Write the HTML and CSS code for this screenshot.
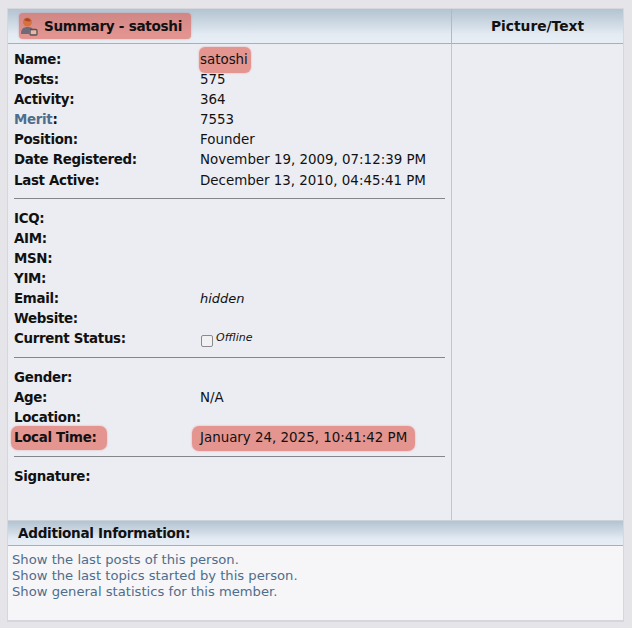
FILE: index.html
```html
<!DOCTYPE html>
<html lang="en">
<head>
<meta charset="UTF-8" />
<title>Summary - satoshi</title>
<link rel="stylesheet" href="styles.css">
</head>
<body>

<div class="profile">

  <div class="columns">
    <div class="head head-left">
      <span class="mark mark-title">
        <svg class="icon" width="18" height="20" viewBox="0 0 18 20">
          <path d="M1 18 C1 12 4 11 8 11 C11 11 13 12 13 14 L9 14 L9 18 Z" fill="#6e6a78" />
          <circle cx="7.5" cy="6" r="4.5" fill="#d9713c" />
          <path d="M4 4 C6 1 10 2 11 5 C8 6 6 5 4 4 Z" fill="#a8482a" />
          <rect x="10" y="13.5" width="7" height="5.5" rx="1" fill="#e8b9a0" stroke="#55505c" stroke-width="1.3" />
        </svg>
        Summary - satoshi
      </span>
    </div>
    <div class="head head-right">Picture/Text</div>

    <div class="details">
      <div class="row"><b>Name:</b><span><span class="mark mark-name">satoshi</span></span></div>
      <div class="row"><b>Posts:</b><span>575</span></div>
      <div class="row"><b>Activity:</b><span>364</span></div>
      <div class="row"><b><a href="#">Merit</a>:</b><span>7553</span></div>
      <div class="row"><b>Position:</b><span>Founder</span></div>
      <div class="row"><b>Date Registered:</b><span>November 19, 2009, 07:12:39 PM</span></div>
      <div class="row"><b>Last Active:</b><span>December 13, 2010, 04:45:41 PM</span></div>
      <hr />
      <div class="row"><b>ICQ:</b><span></span></div>
      <div class="row"><b>AIM:</b><span></span></div>
      <div class="row"><b>MSN:</b><span></span></div>
      <div class="row"><b>YIM:</b><span></span></div>
      <div class="row"><b>Email:</b><i>hidden</i></div>
      <div class="row"><b>Website:</b><span></span></div>
      <div class="row"><b>Current Status:</b><span class="status"><span class="status-box"></span><i>Offline</i></span></div>
      <hr />
      <div class="row"><b>Gender:</b><span></span></div>
      <div class="row"><b>Age:</b><span>N/A</span></div>
      <div class="row"><b>Location:</b><span></span></div>
      <div class="row"><b><span class="mark mark-label">Local Time:</span></b><span><span class="mark mark-time">January 24, 2025, 10:41:42 PM</span></span></div>
      <hr class="hr-last" />
      <div class="row"><b>Signature:</b><span></span></div>
    </div>
    <div class="picture"></div>
  </div>

  <div class="head head-info">Additional Information:</div>
  <div class="links">
    <a href="#">Show the last posts of this person.</a>
    <a href="#">Show the last topics started by this person.</a>
    <a href="#">Show general statistics for this member.</a>
  </div>

</div>

</body>
</html>
```

FILE: styles.css
```css
html, body {
  height: 100%;
}
body {
  margin: 0;
  padding: 8px 8px 8px 7px;
  box-sizing: border-box;
  background: #e5e4e9;
  font-family: "DejaVu Sans", Verdana, sans-serif;
  font-size: 13.4px;
  color: #111;
}
a {
  color: #4f6d8c;
  text-decoration: none;
}
b {
  font-size: 13.4px;
  letter-spacing: -0.32px;
}
.profile {
  height: 611px;
  display: flex;
  flex-direction: column;
  border: 1px solid #d6d6dc;
  border-bottom-width: 2px;
  background: #ecedf3;
}
.columns {
  display: grid;
  grid-template-columns: 443px 1fr;
  grid-template-rows: 35px 476px;
}
.head {
  background: linear-gradient(#b3c3d1, #cfdae5 45%, #e4ebf3 75%, #e8eef5);
  border-bottom: 1px solid #a9aeb8;
  box-sizing: border-box;
  font-weight: bold;
  font-size: 13.6px;
  letter-spacing: -0.3px;
  display: flex;
  align-items: center;
}
.head-left {
  padding-left: 11px;
  padding-bottom: 3px;
}
.head-right {
  border-left: 1px solid #b4b8c0;
  justify-content: center;
  padding-bottom: 1px;
  font-size: 13.8px;
  letter-spacing: 0;
}
.head-info {
  height: 26px;
  padding-left: 10px;
  border-top: 1px solid #ccd2dc;
}
.icon {
  margin-right: 6px;
}
.mark {
  border-radius: 4px;
  background: rgba(224, 90, 78, 0.6);
  box-shadow: 0 0 2px rgba(224, 90, 78, 0.5);
}
.mark-title {
  display: inline-flex;
  align-items: center;
  height: 26px;
  padding: 0 9px 0 1px;
  margin-top: 2px;
}
.mark-name {
  padding: 5px 3px 6px 1px;
  margin-left: -1px;
  border-radius: 6px;
}
.mark-label {
  padding: 4px 10px 5px 3px;
  margin-left: -3px;
  border-radius: 7px;
}
.mark-time {
  padding: 4px 8px 6px 8px;
  margin-left: -8px;
  border-radius: 7px;
}
.details {
  padding: 6px 6px 0 6px;
}
.picture {
  border-left: 1px solid #c2c5cc;
}
.row {
  display: grid;
  grid-template-columns: 186px 1fr;
  height: 20.1px;
  line-height: 20px;
  white-space: nowrap;
}
.row i {
  font-size: 13px;
}
hr {
  border: 0;
  border-top: 1px solid #84868c;
  margin: 7.5px 0 9.6px;
}
.hr-last {
  margin-top: 8.5px;
}
.status {
  display: flex;
  align-items: flex-start;
}
.status-box {
  width: 10px;
  height: 10px;
  margin: 6px 3px 0 1px;
  background: #f1f1f3;
  border: 1px solid #8a8a8e;
  border-radius: 2px;
}
.status i {
  font-size: 11px;
  line-height: 17px;
}
.links {
  flex: 1;
  display: flex;
  flex-direction: column;
  padding: 5.6px 4px;
  background: #f6f6f8;
  line-height: 16.2px;
  font-size: 13.15px;
}
```
